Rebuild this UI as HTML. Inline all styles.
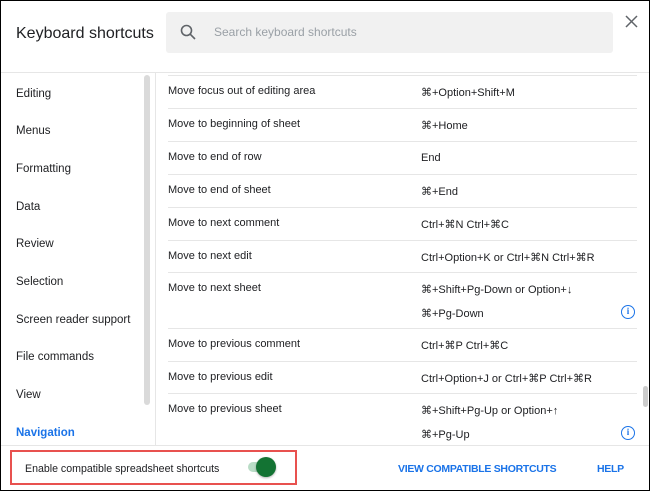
<!DOCTYPE html>
<html><head><style>
*{margin:0;padding:0;box-sizing:border-box}
body{width:650px;height:491px;overflow:hidden;background:#fff;font-family:"Liberation Sans",Arial,sans-serif;position:relative;color:#202124}
.frame{position:absolute;left:0;top:0;width:650px;height:491px;border:1px solid #000}
.title{position:absolute;left:16px;top:25px;font-size:16px;color:#202124}
.search{position:absolute;left:166px;top:12px;width:447px;height:41px;background:#f1f1f1;border-radius:3px}
.search span{position:absolute;left:48px;top:13px;font-size:12px;color:#9aa0a6}
.hline{position:absolute;left:1px;right:1px;top:72px;height:1px;background:#e6e6e6}
.vline{position:absolute;left:155px;top:73px;width:1px;height:372px;background:#e6e6e6}
.side div{position:absolute;left:16px;font-size:11.5px;color:#202124}
.lsb{position:absolute;left:144px;top:75px;width:6px;height:330px;background:#dadada;border-radius:3px}
.row{position:absolute;left:168px;width:469px;border-top:1px solid #e6e6e6;font-size:11px}
.row .n{position:absolute;left:0;top:9px}
.row .k{position:absolute;left:253px;top:10px}
.row .k2{position:absolute;left:253px;top:34px}
.info{position:absolute;right:2px;top:32px;width:14px;height:14px;border:1.5px solid #1a73e8;border-radius:50%;color:#1a73e8;font-size:9px;font-weight:bold;text-align:center;line-height:11px;font-family:"Liberation Serif",serif}
.rsb{position:absolute;left:643px;top:386px;width:5px;height:21px;background:#ccc;border-radius:3px}
.fline{position:absolute;left:1px;right:1px;top:445px;height:1px;background:#e6e6e6}
.box{position:absolute;left:10px;top:450px;width:287px;height:35px;border:2px solid #e8514f}
.box span{position:absolute;left:13px;top:11px;font-size:10.6px;color:#202124}
.track{position:absolute;width:24px;height:10px;border-radius:5px;background:#b9dcc6}
.knob{position:absolute;width:20px;height:20px;border-radius:50%;background:#137333;box-shadow:0 1px 2px rgba(0,0,0,.3)}
.link{position:absolute;top:463px;font-size:10.5px;font-weight:bold;color:#1a73e8;letter-spacing:-0.3px}
</style></head><body>
<div class="title">Keyboard shortcuts</div>
<div class="search">
<svg style="position:absolute;left:14px;top:12px" width="16" height="16" viewBox="0 0 16 16"><circle cx="6.5" cy="6.5" r="5" fill="none" stroke="#5f6368" stroke-width="1.6"/><line x1="10.2" y1="10.2" x2="15" y2="15" stroke="#5f6368" stroke-width="1.6"/></svg>
<span>Search keyboard shortcuts</span></div>
<svg style="position:absolute;left:625px;top:15px" width="13" height="13" viewBox="0 0 13 13"><path d="M1 1L12 12M12 1L1 12" stroke="#5f6368" stroke-width="1.5"/></svg>
<div class="hline"></div>
<div class="vline"></div>
<div class="lsb"></div>
<div class="side">
<div style="top:88px">Editing</div>
<div style="top:125px">Menus</div>
<div style="top:163px">Formatting</div>
<div style="top:201px">Data</div>
<div style="top:238px">Review</div>
<div style="top:276px">Selection</div>
<div style="top:314px">Screen reader support</div>
<div style="top:351px">File commands</div>
<div style="top:389px">View</div>
<div style="top:427px;color:#1a73e8;font-weight:bold">Navigation</div>
</div>
<div class="row" style="top:75px;height:33px"><span class="n">Move focus out of editing area</span><span class="k">⌘+Option+Shift+M</span></div>
<div class="row" style="top:108px;height:33px"><span class="n">Move to beginning of sheet</span><span class="k">⌘+Home</span></div>
<div class="row" style="top:141px;height:33px"><span class="n">Move to end of row</span><span class="k">End</span></div>
<div class="row" style="top:174px;height:33px"><span class="n">Move to end of sheet</span><span class="k">⌘+End</span></div>
<div class="row" style="top:207px;height:33px"><span class="n">Move to next comment</span><span class="k">Ctrl+⌘N Ctrl+⌘C</span></div>
<div class="row" style="top:240px;height:32px"><span class="n">Move to next edit</span><span class="k">Ctrl+Option+K or Ctrl+⌘N Ctrl+⌘R</span></div>
<div class="row" style="top:272px;height:56px"><span class="n">Move to next sheet</span><span class="k">⌘+Shift+Pg-Down or Option+↓</span><span class="k2">⌘+Pg-Down</span><div class="info">i</div></div>
<div class="row" style="top:328px;height:33px"><span class="n">Move to previous comment</span><span class="k">Ctrl+⌘P Ctrl+⌘C</span></div>
<div class="row" style="top:361px;height:32px"><span class="n">Move to previous edit</span><span class="k">Ctrl+Option+J or Ctrl+⌘P Ctrl+⌘R</span></div>
<div class="row" style="top:393px;height:52px"><span class="n">Move to previous sheet</span><span class="k">⌘+Shift+Pg-Up or Option+↑</span><span class="k2">⌘+Pg-Up</span><div class="info">i</div></div>
<div class="rsb"></div>
<div class="fline"></div>
<div class="box"><span>Enable compatible spreadsheet shortcuts</span></div>
<div class="track" style="left:248px;top:462px"></div>
<div class="knob" style="left:256px;top:457px"></div>
<div class="link" style="left:398px">VIEW COMPATIBLE SHORTCUTS</div>
<div class="link" style="left:597px">HELP</div>
<div class="frame"></div>
</body></html>
